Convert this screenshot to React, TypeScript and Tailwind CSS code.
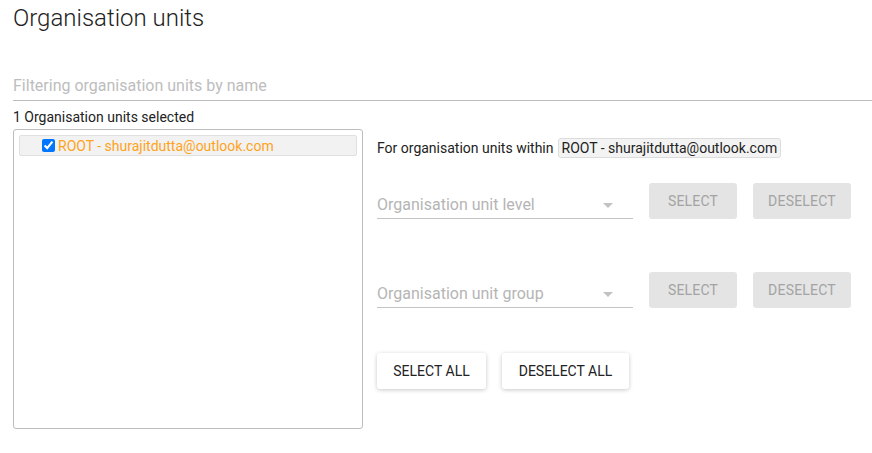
import React from "react";

const font = { fontFamily: "Roboto, 'Noto Sans', sans-serif" };

function GreyButton({ label, width }: { label: string; width: string }) {
  return (
    <button
      disabled
      className={`h-9 ${width} rounded-[3px] bg-[#e4e4e4] text-[14px] font-normal uppercase tracking-[0.2px] text-[#a3a3a3]`}
    >
      {label}
    </button>
  );
}

function LevelSelect({ placeholder }: { placeholder: string }) {
  return (
    <div className="relative flex h-9 w-[256px] items-end border-b border-[#c4c4c4] pb-[3px]">
      <span className="text-[16px] leading-5 text-[#b5b5b5]">{placeholder}</span>
      <svg
        className="absolute right-[20px] top-[20px]"
        width="10"
        height="5"
        viewBox="0 0 10 5"
      >
        <path d="M0 0 L10 0 L5 5 Z" fill="#c2c2c2" />
      </svg>
    </div>
  );
}

function WhiteButton({ label, width }: { label: string; width: string }) {
  return (
    <button
      className={`h-9 ${width} rounded-[3px] bg-white text-[14px] font-normal uppercase text-[#222] shadow-[0_1px_4px_rgba(0,0,0,0.22)]`}
    >
      {label}
    </button>
  );
}

export default function App() {
  return (
    <div className="min-h-[453px] w-[872px] bg-white pl-[13px] text-[#333]" style={font}>
      <h1 className="pt-0.5 text-[24px] font-light leading-8 text-[#222]">
        Organisation units
      </h1>

      <div className="mt-[40px] border-b border-[#bdbdbd] pb-[2px]">
        <input
          placeholder="Filtering organisation units by name"
          className="w-full bg-transparent text-[16px] leading-6 outline-none placeholder:text-[#bdbdbd]"
        />
      </div>

      <div className="mt-[6px] text-[14px] leading-5 text-[#222]">
        1 Organisation units selected
      </div>

      <div className="mt-[2px] flex gap-[14px]">
        <div className="h-[300px] w-[350px] rounded-[3px] border border-[#bdbdbd] p-[5px]">
          <div className="flex h-[21px] items-center rounded-[2px] border border-[#e0e0e0] bg-[#f2f2f2] pl-[22px]">
            <input
              type="checkbox"
              checked
              readOnly
              className="m-0 h-[13px] w-[13px] accent-[#0075ff]"
            />
            <span className="ml-[3px] text-[14px] leading-5 text-[#ffa31a]">
              ROOT - shurajitdutta@outlook.com
            </span>
          </div>
        </div>

        <div className="flex flex-col pt-[9px]">
          <div className="flex items-center text-[14px] leading-5 text-[#222]">
            <span>For organisation units within</span>
            <span className="ml-[4px] rounded-[3px] border border-[#dcdcdc] bg-[#f3f3f3] px-[3px] leading-[18px]">
              ROOT - shurajitdutta@outlook.com
            </span>
          </div>

          <div className="mt-[25px] flex items-start gap-4">
            <LevelSelect placeholder="Organisation unit level" />
            <GreyButton label="Select" width="w-[88px]" />
            <GreyButton label="Deselect" width="w-[98px]" />
          </div>

          <div className="mt-[53px] flex items-start gap-4">
            <LevelSelect placeholder="Organisation unit group" />
            <GreyButton label="Select" width="w-[88px]" />
            <GreyButton label="Deselect" width="w-[98px]" />
          </div>

          <div className="mt-[45px] flex gap-4">
            <WhiteButton label="Select all" width="w-[109px]" />
            <WhiteButton label="Deselect all" width="w-[127px]" />
          </div>
        </div>
      </div>
    </div>
  );
}
